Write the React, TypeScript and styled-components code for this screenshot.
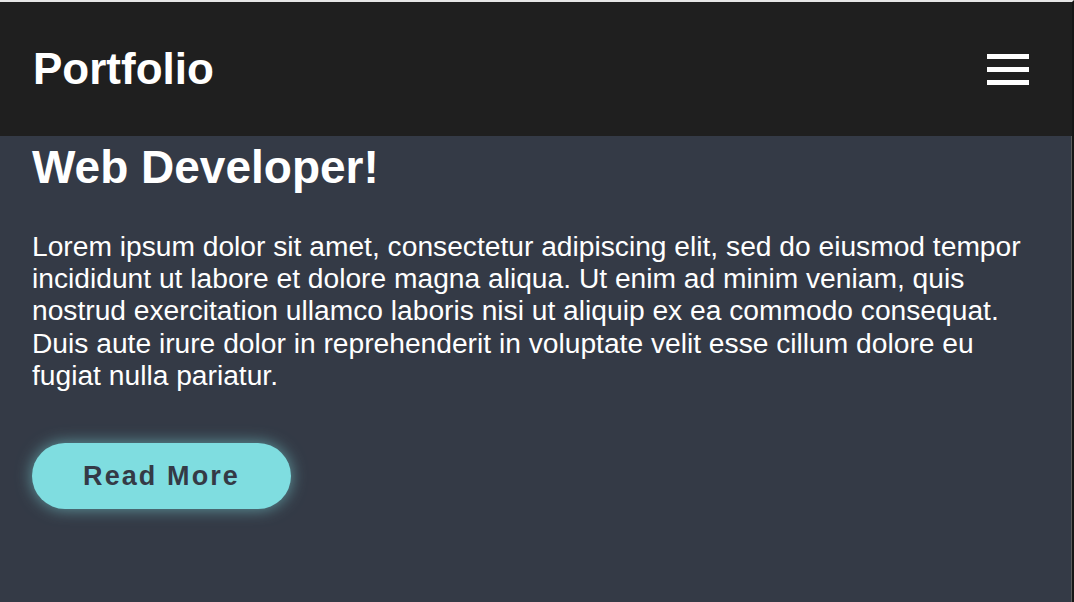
import React from "react";
import styled, { createGlobalStyle } from "styled-components";

const GlobalStyle = createGlobalStyle`
  html, body {
    margin: 0;
    padding: 0;
    background: #343a46;
  }
  body {
    font-family: "Liberation Sans", Arial, Helvetica, sans-serif;
  }
  * { box-sizing: border-box; }
`;

const Frame = styled.div`
  min-height: 100vh;
  display: flex;
  flex-direction: column;
  background: #343a46;
  border-top: 2px solid #e6e6e6;
  border-right: 2px solid #161616;
  box-shadow: inset -1px 0 0 #5c5c5c;
`;

const Header = styled.header`
  height: 134px;
  flex-shrink: 0;
  display: flex;
  align-items: center;
  justify-content: space-between;
  padding: 0 43px 0 33px;
  background: #1f1f1f;
`;

const Logo = styled.div`
  color: #ffffff;
  font-size: 44px;
  font-weight: 700;
`;

const MenuButton = styled.button`
  display: flex;
  flex-direction: column;
  gap: 8px;
  padding: 0;
  margin: 0;
  border: none;
  background: transparent;
  cursor: pointer;
`;

const Bar = styled.span`
  display: block;
  width: 42px;
  height: 5px;
  background: #ffffff;
`;

const Main = styled.main`
  flex: 1;
  padding: 4px 32px 0 32px;
  color: #ffffff;
`;

const Title = styled.h1`
  margin: 0;
  font-size: 46px;
  font-weight: 700;
  line-height: normal;
`;

const Text = styled.p`
  margin: 36px 0 0 0;
  font-size: 28.2px;
  line-height: 32.2px;
  font-weight: 400;
`;

const ReadMore = styled.button`
  margin-top: 52px;
  height: 66px;
  width: 259px;
  border: none;
  border-radius: 33px;
  background: #7fdde0;
  color: #343a46;
  font-family: "Liberation Sans", Arial, Helvetica, sans-serif;
  font-size: 27px;
  font-weight: 700;
  letter-spacing: 2.1px;
  box-shadow: 0 0 16px rgba(127, 221, 224, 0.6);
  cursor: pointer;
`;

export default function App() {
  return (
    <>
      <GlobalStyle />
      <Frame>
        <Header>
          <Logo>Portfolio</Logo>
          <MenuButton aria-label="Menu">
            <Bar />
            <Bar />
            <Bar />
          </MenuButton>
        </Header>
        <Main>
          <Title>Web Developer!</Title>
          <Text>
            Lorem ipsum dolor sit amet, consectetur adipiscing elit, sed do eiusmod tempor
            incididunt ut labore et dolore magna aliqua. Ut enim ad minim veniam, quis nostrud
            exercitation ullamco laboris nisi ut aliquip ex ea commodo consequat. Duis aute irure
            dolor in reprehenderit in voluptate velit esse cillum dolore eu fugiat nulla pariatur.
          </Text>
          <ReadMore>Read More</ReadMore>
        </Main>
      </Frame>
    </>
  );
}
